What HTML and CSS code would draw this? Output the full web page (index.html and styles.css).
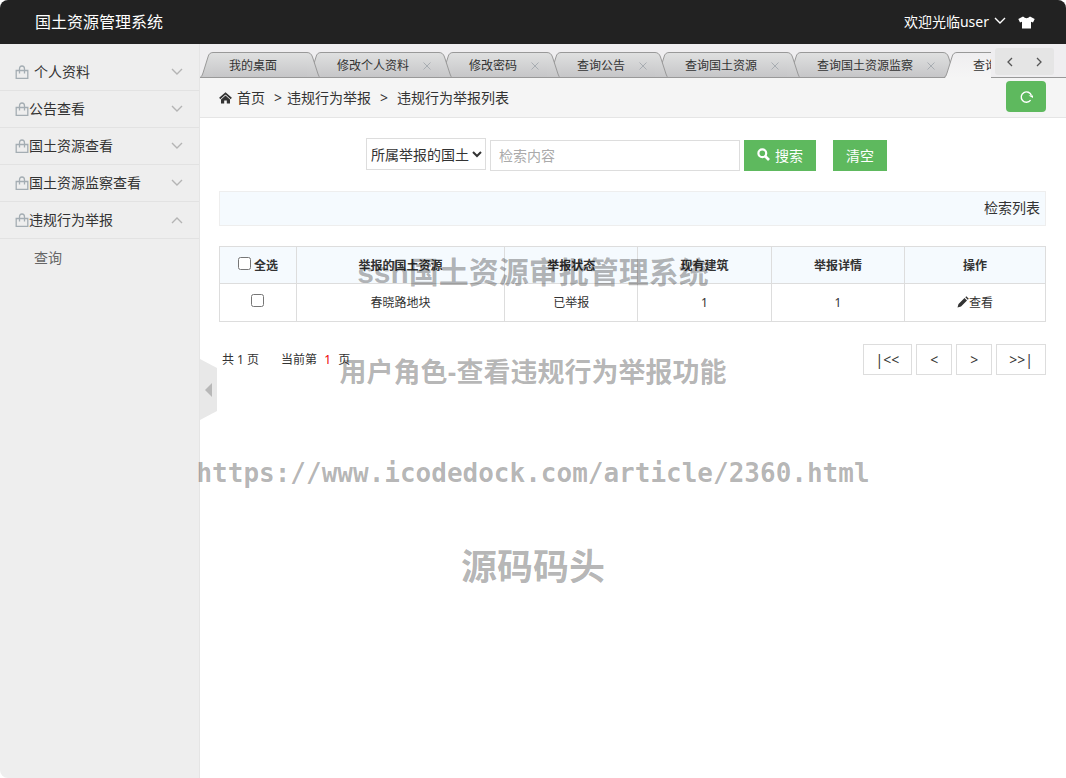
FILE: index.html
```html
<!DOCTYPE html>
<html lang="zh-CN">
<head>
<meta charset="utf-8">
<title>国土资源管理系统</title>
<link rel="stylesheet" href="styles.css">
</head>
<body>
<svg class="defs" aria-hidden="true">
  <defs>
    <linearGradient id="gray" x1="0" y1="0" x2="0" y2="1"><stop offset="0" stop-color="#dfe0e0"/><stop offset="1" stop-color="#c6c6c8"/></linearGradient>
    <linearGradient id="light" x1="0" y1="0" x2="0" y2="1"><stop offset="0" stop-color="#efeef0"/><stop offset="1" stop-color="#f5f5f5"/></linearGradient>
    <symbol id="edge-l" viewBox="0 0 13 26"><path d="M1 26 Q2 25 3 21 L8 5 Q9 .5 13 .5 V26z" fill="url(#gray)"/><path d="M13 25.500H0 Q2 25 3 21 L8 5 Q9 .5 13 .5" fill="none" stroke="#999"/></symbol>
    <symbol id="edge-r" viewBox="0 0 13 26"><path d="M0 .5 Q4 .5 5.500 5 L11 22 Q12 25 13 26 H0z" fill="url(#gray)"/><path d="M0 .5 Q4 .5 5.500 5 L11 22 Q12 25 13 25.500 H0" fill="none" stroke="#999"/></symbol>
    <symbol id="edge-on" viewBox="0 0 13 26"><path d="M1 26 Q2 25 3 21 L8 5 Q9 .5 13 .5 V26z" fill="url(#light)"/><path d="M0 25.500 Q2 25 3 21 L8 5 Q9 .5 13 .5" fill="none" stroke="#999"/></symbol>
    <symbol id="bag" viewBox="0 0 14 14"><path d="M1.200 5.500h11.600v7.800H1.200z M4.500 8.500V4Q4.500 1 7 1T9.500 4V8.500" fill="none" stroke="#a4adb3" stroke-width="1.300"/></symbol>
    <symbol id="down" viewBox="0 0 12 8"><path d="M1 1l5 5 5-5" fill="none" stroke="currentColor" stroke-width="1.400"/></symbol>
    <symbol id="up" viewBox="0 0 12 8"><path d="M1 7l5-5 5 5" fill="none" stroke="currentColor" stroke-width="1.400"/></symbol>
    <symbol id="x" viewBox="0 0 8 8"><path d="M.5.5l7 7M7.500.5l-7 7" stroke="#a8adb2" fill="none"/></symbol>
  </defs>
</svg>
<div class="app">
  <header class="header">
    <h1 class="brand">国土资源管理系统</h1>
    <div class="user">
      <button class="plain user-menu">欢迎光临user <svg class="chevron"><use href="#down"/></svg></button>
      <button class="plain" aria-label="换肤"><svg class="shirt" viewBox="0 0 17 13"><path d="M5 .5Q8.500 4 12 .5L16.700 3 15 6.500 13 5.700V12.500H4V5.700L2 6.500.3 3z" fill="#fff"/></svg></button>
    </div>
  </header>
  <div class="body">
    <aside class="side">
      <button class="side-item spaced"><svg class="bag"><use href="#bag"/></svg><span>个人资料</span><svg class="chevron"><use href="#down"/></svg></button>
      <button class="side-item"><svg class="bag"><use href="#bag"/></svg><span>公告查看</span><svg class="chevron"><use href="#down"/></svg></button>
      <button class="side-item"><svg class="bag"><use href="#bag"/></svg><span>国土资源查看</span><svg class="chevron"><use href="#down"/></svg></button>
      <button class="side-item"><svg class="bag"><use href="#bag"/></svg><span>国土资源监察查看</span><svg class="chevron"><use href="#down"/></svg></button>
      <button class="side-item"><svg class="bag"><use href="#bag"/></svg><span>违规行为举报</span><svg class="chevron"><use href="#up"/></svg></button>
      <a class="side-link" href="#">查询</a>
    </aside>
    <main class="main">
      <button class="plain fold" aria-label="收起菜单"><svg viewBox="0 0 17 62"><path d="M0 0L17 9V52L0 61z" fill="#e8e8e8"/><path d="M5 31l7-7v14z" fill="#b8b8b8"/></svg></button>
      <div class="tabbar">
        <nav class="tabs">
          <div class="tab t1"><svg class="edge"><use href="#edge-l"/></svg><i class="fill"></i><svg class="edge right"><use href="#edge-r"/></svg><a href="#">我的桌面</a></div>
          <div class="tab t2"><svg class="edge"><use href="#edge-l"/></svg><i class="fill"></i><svg class="edge right"><use href="#edge-r"/></svg><a href="#">修改个人资料</a><button class="plain close" aria-label="关闭"><svg><use href="#x"/></svg></button></div>
          <div class="tab t3"><svg class="edge"><use href="#edge-l"/></svg><i class="fill"></i><svg class="edge right"><use href="#edge-r"/></svg><a href="#">修改密码</a><button class="plain close" aria-label="关闭"><svg><use href="#x"/></svg></button></div>
          <div class="tab t4"><svg class="edge"><use href="#edge-l"/></svg><i class="fill"></i><svg class="edge right"><use href="#edge-r"/></svg><a href="#">查询公告</a><button class="plain close" aria-label="关闭"><svg><use href="#x"/></svg></button></div>
          <div class="tab t5"><svg class="edge"><use href="#edge-l"/></svg><i class="fill"></i><svg class="edge right"><use href="#edge-r"/></svg><a href="#">查询国土资源</a><button class="plain close" aria-label="关闭"><svg><use href="#x"/></svg></button></div>
          <div class="tab t6"><svg class="edge"><use href="#edge-l"/></svg><i class="fill"></i><svg class="edge right"><use href="#edge-r"/></svg><a href="#">查询国土资源监察</a><button class="plain close" aria-label="关闭"><svg><use href="#x"/></svg></button></div>
          <div class="tab on"><svg class="edge"><use href="#edge-on"/></svg><i class="fill"></i><a href="#">查询违规行为举报</a></div>
        </nav>
        <div class="tab-nav">
          <button class="plain" aria-label="向左"><svg viewBox="0 0 8 12"><path d="M6 2L2 6l4 4" fill="none" stroke="#555" stroke-width="1.300"/></svg></button>
          <button class="plain" aria-label="向右"><svg viewBox="0 0 8 12"><path d="M2 2l4 4-4 4" fill="none" stroke="#555" stroke-width="1.300"/></svg></button>
        </div>
      </div>
      <div class="crumbs">
        <svg class="home" viewBox="0 0 13 12"><path d="M.7 6.500L6.500 1.300l5.800 5.200" fill="none" stroke="#333" stroke-width="1.700"/><path d="M2 7.500L6.500 3.600 11 7.500V11.500H7.800V8.500H5.200V11.500H2z" fill="#333"/></svg>
        <a class="first" href="#">首页</a><span>&gt;</span><a class="second" href="#">违规行为举报</a><span>&gt;</span><a class="third" href="#">违规行为举报列表</a>
        <button class="plain refresh" aria-label="刷新"><svg viewBox="0 0 15 14"><path d="M11.600 10.200A5.200 5.200 0 1 1 12.400 5.500" fill="none" stroke="#fff" stroke-width="1.400"/><path d="M9.500 5.500h4.500v2.500z" fill="#fff"/></svg></button>
      </div>
      <div class="content">
        <form class="search">
          <select aria-label="检索字段"><option>所属举报的国土资源</option></select>
          <input type="text" placeholder="检索内容" aria-label="检索内容">
          <button class="btn go" type="button"><svg viewBox="0 0 13 13"><circle cx="5.300" cy="5.300" r="3.900" fill="none" stroke="#fff" stroke-width="2.200"/><path d="M8 8l4 4" stroke="#fff" stroke-width="2.600"/></svg>搜索</button>
          <button class="btn" type="reset">清空</button>
        </form>
        <div class="list-bar">检索列表</div>
        <table class="grid">
          <colgroup><col class="c1"><col class="c2"><col class="c3"><col class="c3"><col class="c3"><col class="c4"></colgroup>
          <thead><tr><th><label><input type="checkbox"> 全选</label></th><th>举报的国土资源</th><th>举报状态</th><th>现有建筑</th><th>举报详情</th><th>操作</th></tr></thead>
          <tbody><tr><td><input type="checkbox" aria-label="选择"></td><td>春晓路地块</td><td>已举报</td><td>1</td><td>1</td><td><a href="#"><svg class="pen" viewBox="0 0 12 12"><path d="M.5 11.500l1-3.500 6-6 2.500 2.500-6 6zM8.300 1.200l1-1 2.500 2.500-1 1z" fill="#333"/></svg>查看</a></td></tr></tbody>
        </table>
        <div class="pager">
          <p>共 1 页</p><p>当前第 <em>1</em> 页</p>
          <nav><button>|&lt;&lt;</button><button>&lt;</button><button>&gt;</button><button>&gt;&gt;|</button></nav>
        </div>
      </div>
    </main>
  </div>
  <div class="watermark">
    <p class="w1">ssh国土资源审批管理系统</p>
    <p class="w2">用户角色-查看违规行为举报功能</p>
    <p class="w3">https://www.icodedock.com/article/2360.html</p>
    <p class="w4">源码码头</p>
  </div>
</div>
</body>
</html>
```
FILE: styles.css
```css
* { box-sizing: border-box; }
body, h1, p { margin: 0; }
body, button, input, select { font-family: "Noto Sans", "Noto Sans CJK SC", sans-serif; font-size: 14px; color: #333; }
body { line-height: 20px; background: #fff; }
a { color: inherit; text-decoration: none; }
svg { display: block; flex: none; }
.defs { position: absolute; width: 0; height: 0; }
.plain { border: 0; background: none; padding: 0; }
.app { position: relative; min-height: 100vh; display: flex; flex-direction: column; border-radius: 8px; overflow: hidden; background: #fff; }
.header { height: 44px; background: #222; color: #fff; display: flex; align-items: center; justify-content: space-between; padding: 0 31px 0 35px; }
.brand { font-size: 16px; font-weight: 400; }
.user { display: flex; align-items: center; gap: 12px; }
.user-menu { display: flex; align-items: center; gap: 5px; color: #fff; padding-bottom: 2px; }
.chevron { width: 12px; height: 8px; }
.shirt { width: 17px; height: 13px; }
.body { flex: 1; display: flex; }

.side { width: 200px; flex: none; background: #eee; border-right: 1px solid #e5e5e5; padding-top: 10px; }
.side-item { width: 100%; height: 37px; display: flex; align-items: center; background: none; border: 0; border-bottom: 1px solid #e2e2e2; padding: 0 16px 0 15px; }
.side-item span { padding-bottom: 2px; }
.bag { width: 14px; height: 14px; }
.side-item .chevron { margin-left: auto; color: #b4b4b4; }
.spaced span { margin-left: 5px; }
.side-link { display: block; padding: 9px 34px; color: #666; }

.main { position: relative; flex: 1; min-width: 0; }
.fold { position: absolute; left: 0; top: 315px; width: 17px; height: 62px; }
.tabbar { position: relative; height: 34px; padding: 8px 75px 0 0; background: #efeef0; border-bottom: 1px solid #999; }
.tabs { display: flex; height: 26px; overflow: hidden; }
.tab { position: relative; flex: none; display: flex; align-items: center; height: 26px; padding: 1px 31px 0 29px; font-size: 12px; }
.tab a, .close { position: relative; }
.edge { position: absolute; left: 0; top: 0; width: 13px; height: 26px; }
.right { left: auto; right: -12px; }
.fill { position: absolute; left: 13px; right: 1px; top: 0; height: 26px; background: linear-gradient(#dfe0e0, #c6c6c8); border: solid #999; border-width: 1px 0; }
.on .fill { background: linear-gradient(#efeef0, #f5f5f5); border-bottom: 0; }
.close { width: 8px; height: 8px; margin: 0 -22px 0 14px; }
.close svg { width: 8px; height: 8px; }
.t1 { z-index: 6; }
.t2 { z-index: 5; }
.t3 { z-index: 4; }
.t4 { z-index: 3; }
.t5 { z-index: 2; }
.t6 { z-index: 1; }
.on { z-index: 7; }
.tab-nav { position: absolute; right: 12px; top: 4px; width: 59px; height: 27px; border-radius: 3px; background: #e5e5e5; display: flex; align-items: center; justify-content: space-between; padding: 0 11px; }
.tab-nav svg { width: 8px; height: 12px; }
.crumbs { display: flex; align-items: center; height: 40px; padding: 0 20px 0 19px; background: #f5f5f5; border-bottom: 1px solid #e5e5e5; }
.home { width: 13px; height: 12px; margin-right: 5px; }
.crumbs span { margin: 0 5px 0 9px; }
.crumbs .second + span { margin-right: 9px; }
.refresh { width: 40px; height: 31px; margin: 0 0 2px auto; border-radius: 4px; background: #5eb95e; display: grid; place-items: center; }
.refresh svg { width: 15px; height: 14px; }

.content { padding: 20px 20px 0 19px; }
.search { display: flex; align-items: flex-end; justify-content: center; gap: 4px; padding-right: 12px; }
.search select { width: 120px; height: 32px; margin-bottom: 1px; border: 1px solid #ddd; background: #fff; padding: 0; border-radius: 0; }
.search input { width: 250px; height: 31px; border: 1px solid #ddd; padding: 0 8px; }
.search input::placeholder { color: #aaa; }
.btn { height: 31px; border: 0; background: #5eb95e; color: #fff; padding: 0 13px 2px; }
.go { display: flex; align-items: center; gap: 5px; margin-right: 13px; }
.go svg { width: 13px; height: 13px; }
.list-bar { margin-top: 20px; height: 35px; line-height: 32px; padding: 0 5px; text-align: right; background: #f5fafe; border: 1px solid #eee; }
.grid { width: 100%; margin-top: 20px; border-collapse: collapse; table-layout: fixed; font-size: 12px; text-align: center; }
.grid th, .grid td { border: 1px solid #ddd; padding: 0; height: 37px; }
.grid td { height: 38px; }
.grid th { background: #f5fafe; padding-top: 2px; }
.grid input { width: 13px; height: 13px; margin: 0; vertical-align: 0; }
.c1 { width: 9.3%; }
.c2 { width: 25.2%; }
.c3 { width: 16.15%; }
.c4 { width: 17.05%; }
.pen { display: inline-block; width: 12px; height: 12px; vertical-align: -1px; }
.pager { display: flex; align-items: center; gap: 22px; margin-top: 22px; padding-left: 3px; font-size: 12px; }
.pager em { color: #e00; font-style: normal; margin: 0 4px; }
.pager nav { margin-left: auto; display: flex; gap: 4px; }
.pager button { height: 31px; min-width: 36px; padding: 0 12px; background: #fff; border: 1px solid #ddd; }

.watermark { position: absolute; left: 0; right: 0; top: 253px; text-align: center; white-space: nowrap; font-family: "Liberation Sans", "Noto Sans CJK SC", sans-serif; font-weight: 700; color: rgba(0, 0, 0, .3); pointer-events: none; line-height: 40px; }
.watermark p { margin-bottom: 60px; }
.w1 { font-size: 30px; }
.w2 { font-size: 27px; }
.w3 { font-family: "DejaVu Sans Mono", monospace; font-size: 26px; }
.w4 { font-size: 36px; }
.watermark .w3 { margin-bottom: 55px; }
```
